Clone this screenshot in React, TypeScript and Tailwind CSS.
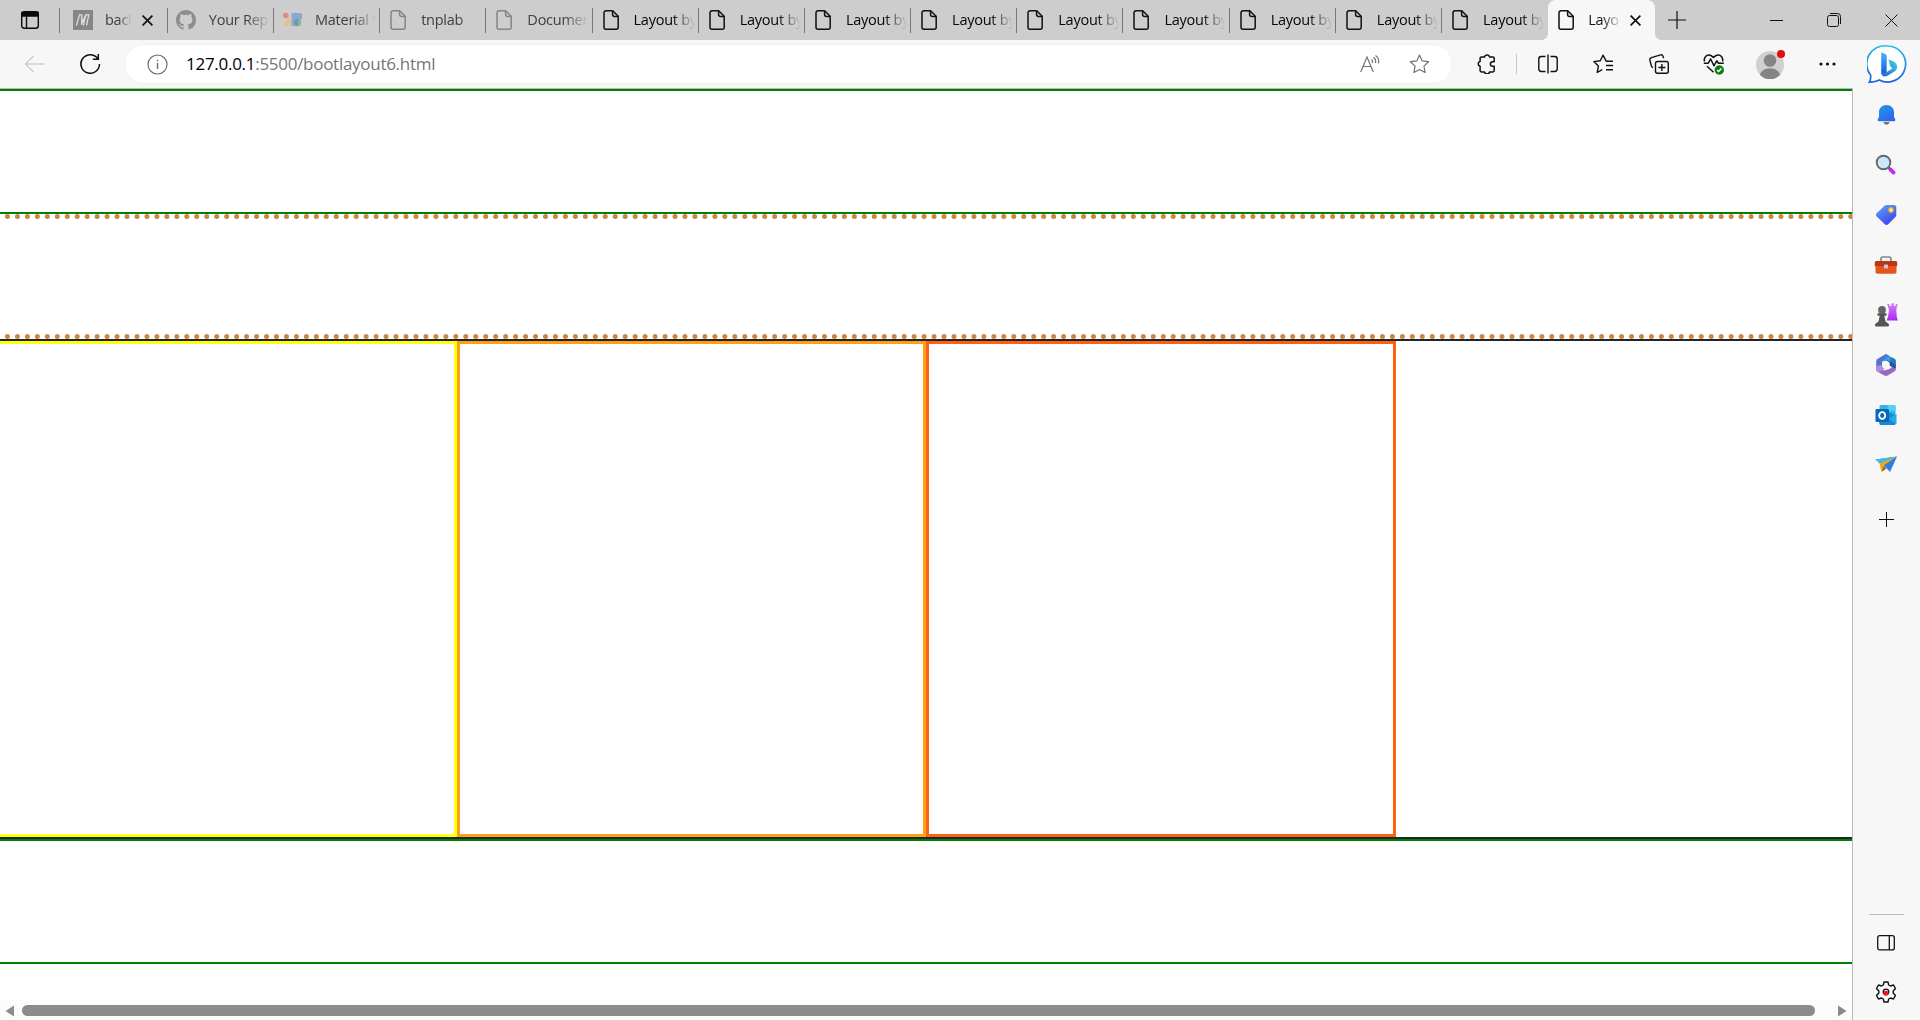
import React from 'react';

const FileIcon = ({ dim = false }: { dim?: boolean }) => (
  <svg width="16" height="20" viewBox="0 0 16 20" fill="none" stroke={dim ? '#858585' : '#111'} strokeWidth="1.5" strokeLinejoin="round" className="ml-[2px] shrink-0">
    <path d="M3 .8h6.700l5.500 5.500v10.900a2 2 0 0 1-2 2H3a2 2 0 0 1-2-2V2.800a2 2 0 0 1 2-2Z" />
    <path d="M9.600 1v3.600a2 2 0 0 0 2 2h3.500" />
  </svg>
);

const MIcon = () => (
  <svg width="20" height="20" viewBox="0 0 20 20" className="shrink-0">
    <path fill="#868686" d="M0 0h20v20H0z" />
    <path d="M3.300 15.500 6.500 4.800h2.200l.3 8.200 3.700-8.200h3.100l-2.300 10.700M8.700 5v10M12.700 5l-2.400 10.500" fill="none" stroke="#dcdcdc" strokeWidth="1.300" />
  </svg>
);

const GithubIcon = () => (
  <svg width="20" height="20" viewBox="0 0 16 16" fill="#8b8d90" className="shrink-0">
    <path d="M8 0C3.58 0 0 3.58 0 8c0 3.54 2.29 6.53 5.47 7.59.4.07.55-.17.55-.38 0-.19-.01-.82-.01-1.49-2.01.37-2.53-.49-2.69-.94-.09-.23-.48-.94-.82-1.13-.28-.15-.68-.52-.01-.53.63-.01 1.08.58 1.23.82.72 1.21 1.87.87 2.33.66.07-.52.28-.87.51-1.07-1.78-.2-3.64-.89-3.64-3.95 0-.87.31-1.59.82-2.15-.08-.2-.36-1.02.08-2.12 0 0 .67-.21 2.2.82A7.6 7.6 0 0 1 8 3.86c.68 0 1.36.09 2 .27 1.53-1.04 2.2-.82 2.2-.82.44 1.1.16 1.92.08 2.12.51.56.82 1.27.82 2.15 0 3.07-1.87 3.75-3.65 3.95.29.25.54.73.54 1.48 0 1.07-.01 1.93-.01 2.2 0 .21.15.46.55.38A8.01 8.01 0 0 0 16 8c0-4.42-3.58-8-8-8Z" />
  </svg>
);

const MaterialIcon = () => (
  <svg width="20" height="20" viewBox="0 0 20 20" className="shrink-0">
    <path fill="#e6c384" d="M8 5v11H1z" />
    <circle cx="3.800" cy="5.500" r="2.800" fill="#dd8a84" />
    <path fill="#8aa6d6" d="M9.500 3H17a3.500 3.500 0 0 1 0 7 3.500 3.500 0 0 1-3 6H9.500z" />
    <circle cx="15.600" cy="12.600" r="3.700" fill="#86b591" />
    <path fill="#6b98a5" d="M12 12a4 4 0 0 1 4-3v7a4 4 0 0 1-4-3z" />
  </svg>
);

const TabClose = () => (
  <svg width="11" height="11" viewBox="0 0 11 11" stroke="#111" strokeWidth="1.700" className="shrink-0">
    <path d="m.6.6 9.800 9.800M10.400.6.6 10.400" />
  </svg>
);

type TabData = { title: string; icon: React.ReactNode; dim?: boolean };
const tabs: TabData[] = [
  { title: 'Your Rep', icon: <GithubIcon />, dim: true },
  { title: 'Material S', icon: <MaterialIcon />, dim: true },
  { title: 'tnplab', icon: <FileIcon dim />, dim: true },
  { title: 'Documen', icon: <FileIcon dim />, dim: true },
  ...Array.from({ length: 9 }, () => ({ title: 'Layout by', icon: <FileIcon /> })),
];

function Tab({ title, icon, dim, last }: TabData & { last: boolean }) {
  return (
    <div className="relative flex h-10 w-[106.2px] shrink-0 items-center pl-2">
      <div className="flex w-5 shrink-0">{icon}</div>
      <span className={(dim ? 'text-[#404040]' : 'text-[#050505]') + ' ml-[13px] w-[61px] overflow-hidden whitespace-nowrap [mask-image:linear-gradient(to_right,#000_38px,transparent_61px)]'}>
        {title}
      </span>
      {!last && <i className="absolute top-2 right-0 h-[25px] w-px bg-[#777]" />}
    </div>
  );
}

const TabBar = () => (
  <div className="flex h-10 items-center bg-[#cdcdcd] text-[14.5px] tracking-[-0.25px]">
    <div className="flex w-[59px] shrink-0 justify-center pl-px">
      <svg width="18" height="18" viewBox="0 0 18 18" fill="none" stroke="#0a0a0a" strokeWidth="1.400">
        <rect x=".7" y=".7" width="16.600" height="16.600" rx="2.500" />
        <path d="M1 1.500h16V5H1z" fill="#0a0a0a" />
        <path d="M5.500 5v12" />
      </svg>
    </div>
    <i className="h-[25px] w-px shrink-0 bg-[#777]" />
    <div className="flex h-[25px] w-[107.800px] shrink-0 items-center border-r border-[#777] pl-[13px]">
      <MIcon />
      <span className="mr-[10px] ml-[12px] w-[27px] overflow-hidden text-[#404040] [mask-image:linear-gradient(to_right,#000_14px,transparent_27px)]">back</span>
      <TabClose />
    </div>
    {tabs.map((t, i) => (
      <Tab key={i} {...t} last={i === tabs.length - 1} />
    ))}
    <div className="relative flex h-10 w-[107px] shrink-0 items-center rounded-t-lg bg-[#f7f7f7] pl-2">
      <i className="absolute bottom-0 -left-[6px] size-[6px] bg-[radial-gradient(circle_at_0_0,transparent_5.5px,#f7f7f7_6px)]" />
      <i className="absolute -right-[6px] bottom-0 size-[6px] bg-[radial-gradient(circle_at_100%_0,transparent_5.5px,#f7f7f7_6px)]" />
      <FileIcon />
      <span className="mr-3 ml-[14px] w-[30px] overflow-hidden text-[#111] [mask-image:linear-gradient(to_right,#000_14px,transparent_34px)]">Layo</span>
      <TabClose />
    </div>
    <svg width="18" height="18" viewBox="0 0 18 18" stroke="#111" strokeWidth="1.200" className="ml-[13px] shrink-0">
      <path d="M0 9h18M9 0v18" />
    </svg>
    <div className="ml-auto flex items-center pr-[22px]">
      <svg width="13" height="13" viewBox="0 0 13 13" className="mr-11"><path d="M0 6.500h13" stroke="#111" /></svg>
      <svg width="14" height="14" viewBox="0 0 14 14" fill="none" stroke="#111" className="mr-11">
        <rect x=".5" y="2.500" width="11" height="11" rx="2" />
        <path d="M3 .5h7.500a3 3 0 0 1 3 3V11" />
      </svg>
      <svg width="13" height="13" viewBox="0 0 13 13" stroke="#111"><path d="m.5.5 12 12M12.500.5l-12 12" /></svg>
    </div>
  </div>
);

const star = 'm10 1 2.700 5.900 6.400.8-4.700 4.400 1.200 6.400-5.600-3.100-5.600 3.100 1.200-6.400L.9 7.700l6.400-.8z';

const Toolbar = () => (
  <div className="flex h-12 items-center bg-[#f7f7f7]">
    <svg width="21" height="18" viewBox="0 0 21 18" fill="none" stroke="#cfcfcf" strokeWidth="1.300" className="ml-6"><path d="M20.500 9H1.500M9.500 1l-8 8 8 8" /></svg>
    <svg width="22" height="22" viewBox="0 0 22 22" fill="none" stroke="#111" strokeWidth="1.500" className="ml-[34px]">
      <path d="M20.500 11a9.300 9.300 0 1 1-3.500-7.300l2 2M19.300 1v5.200h-5.400" />
    </svg>
    <div className="ml-6 flex h-[38px] w-[1327px] items-center rounded-full bg-white pr-[22px] pl-[22px] shadow-[0_0_2px_#e2e2e2]">
      <svg width="21" height="21" viewBox="0 0 21 21" fill="none" stroke="#707070" strokeWidth="1.200">
        <circle cx="10.500" cy="10.500" r="9.500" /><path d="M10.500 9v6M10.500 5.800v1.500" strokeWidth="1.400" />
      </svg>
      <span className="ml-[18px] text-[17px] tracking-[-0.28px] text-[#767676]"><span className="text-black">127.0.0.1</span>:5500/bootlayout6.html</span>
      <svg width="20" height="18" viewBox="0 0 20 18" fill="none" stroke="#737373" strokeWidth="1.200" className="ml-auto">
        <path d="M.7 17 7 2l6.300 15M3 11.500h8M11.500 4.500c1 .8 1.300 2 1 3.500M13.500 2.200c1.800 1.300 2.500 3.300 2 5.800M15.500.6c2.500 1.600 3.600 4.200 3 7.800" />
      </svg>
      <svg width="21" height="20" viewBox="0 0 20 20" fill="none" stroke="#737373" strokeWidth="1.200" strokeLinejoin="round" className="ml-[29px]"><path d={star} /></svg>
    </div>
    <svg width="19" height="20" viewBox="0 0 19 20" fill="none" stroke="#111" strokeWidth="1.500" strokeLinejoin="round" className="ml-[25px]">
      <path d="M4.500 3h3a2.600 2.600 0 0 1 5.100 0h3.300c.7 0 1.300.6 1.300 1.300v3.400h-1.500a2.300 2.300 0 0 0 0 4.600h1.500v4.200c0 .8-.6 1.400-1.400 1.400h-3.200a2.600 2.600 0 0 1-5.100 0h-3c-.8 0-1.400-.6-1.400-1.400v-4.300a2.400 2.400 0 0 1 0-4.700V4.300C3.100 3.600 3.700 3 4.500 3Z" />
    </svg>
    <i className="ml-[20px] h-5 w-px bg-[#c8c8c8]" />
    <svg width="20" height="20" viewBox="0 0 20 20" fill="none" stroke="#111" strokeWidth="1.400" className="ml-[21px]">
      <path d="M7.500 2.500H3.200A2.400 2.400 0 0 0 .8 4.900v10.200a2.400 2.400 0 0 0 2.400 2.400h4.300M12.500 2.500h4.300a2.400 2.400 0 0 1 2.400 2.400v10.200a2.400 2.400 0 0 1-2.400 2.400h-4.300M10 .5v19" />
    </svg>
    <svg width="21" height="20" viewBox="0 0 21 20" fill="none" stroke="#111" strokeWidth="1.400" strokeLinejoin="round" className="ml-[35px]">
      <path d="M20 7.200h-6.800L10 1.200 7.300 6.800.8 7.600l4.600 4.500-1.200 6.400 5-2.800M13 11.500h7M13 15.700h7" />
    </svg>
    <svg width="20" height="20" viewBox="0 0 20 20" fill="none" stroke="#111" strokeWidth="1.400" className="ml-[35px]">
      <rect x="6.500" y="7.500" width="12.800" height="11.800" rx="2" /><path d="M12.900 10v7M9.400 13.500h7M4 13.500c-1-.3-1.400-1-1.700-1.800L.9 6.200c-.3-1.200.3-2.200 1.500-2.500L11.500.9c1.200-.3 2.100.3 2.500 1.400l.6 2" />
    </svg>
    <svg width="22" height="22" viewBox="0 0 22 22" fill="none" stroke="#111" strokeWidth="1.500" strokeLinejoin="round" className="ml-[34px]">
      <path d="M1.400 8.500C.6 4.500 3.300 1.800 6.200 2c2 .2 3.200 1.300 4.300 2.500 1.100-1.200 2.300-2.300 4.300-2.500 3-.2 5.600 2.500 4.800 6.500M.8 10.200h4.400l2.500-4.200 3.200 6.800 2.800-5 1.800 2.400h5.300M4 13.200l6.500 6" />
      <circle cx="16.300" cy="17" r="4.700" fill="#107c10" stroke="none" /><path d="m14 17 1.600 1.500 2.800-3" stroke="#fff" />
    </svg>
    <svg width="31" height="32" viewBox="0 0 31 32" className="ml-[31px]">
      <circle cx="14" cy="17" r="14" fill="#d2d0ce" /><circle cx="14" cy="12.500" r="6.300" fill="#878583" />
      <path d="M4 26.900c.8-3.800 4.500-6.700 10-6.700s9.200 2.900 10 6.700a14 14 0 0 1-20 0Z" fill="#878583" /><circle cx="25" cy="6" r="4" fill="#e30b0b" />
    </svg>
    <svg width="17" height="4" viewBox="0 0 17 4" fill="#111" className="ml-[32px]"><circle cx="2" cy="2" r="1.600" /><circle cx="8.500" cy="2" r="1.600" /><circle cx="15" cy="2" r="1.600" /></svg>
    <svg width="40" height="41" viewBox="0 0 40 41" className="mr-[13px] ml-auto">
      <defs>
        <linearGradient id="ring" x2="0" y2="1"><stop stopColor="#28bdea" /><stop offset="1" stopColor="#2461db" /></linearGradient>
        <linearGradient id="stem" x2="0" y2="1"><stop stopColor="#48b7f7" /><stop offset="1" stopColor="#1854db" /></linearGradient>
        <linearGradient id="swoosh" x1="0" x2="1" y1="1" y2="0"><stop stopColor="#2161dc" /><stop offset="1" stopColor="#37d9dd" /></linearGradient>
      </defs>
      <path d="M20.500 2a18 18 0 1 1-8.200 34c-3 1.600-6.300 2-9.900 2.200 1.100-1.900 1.500-4.100 1.200-7.200A18 18 0 0 1 20.500 2Z" fill="#fff" stroke="url(#ring)" strokeWidth="1.700" />
      <path d="m14.200 8.300 4 1.600c1 .4 1.500 1.100 1.500 2.200v17.500c-1.500 3-5.500 2.500-5.500-1.200z" fill="url(#stem)" />
      <path d="m21.500 15.500 5 2c4.500 2 4.500 7 1.700 9.500l-8 5c-3.400 1.500-6.200-.5-6-4.500 1 2 3.500 1.800 5.200.8l6.300-4-2.200-1.500z" fill="url(#swoosh)" />
    </svg>
  </div>
);

const sideIcons = [
  <svg key="bell" width="19" height="22" viewBox="0 0 19 22"><defs><linearGradient id="bell" x2=".7" y2="1"><stop stopColor="#1ba0df" /><stop offset="1" stopColor="#3162f1" /></linearGradient></defs><path d="M6.500 18h6c-.5 3.500-5.500 3.500-6 0Z" fill="#777" /><path d="M9.500 1c4.600 0 7.500 3.300 7.500 7.500v4.300l1.200 2.500c.5 1-.1 1.900-1.100 1.900H1.900C.9 17.200.3 16.300.8 15.300L2 12.800V8.500C2 4.300 4.900 1 9.500 1Z" fill="url(#bell)" /></svg>,
  <svg key="search" width="22" height="22" viewBox="0 0 22 22"><path d="m13 13 3 3" stroke="#555" strokeWidth="2" /><path d="m15.300 15.300 3.300 3.300" stroke="#c02af0" strokeWidth="3.800" strokeLinecap="round" /><circle cx="8.500" cy="8.500" r="6.800" fill="#c9e8fb" stroke="#666" strokeWidth="1.900" /></svg>,
  <svg key="tag" width="22" height="22" viewBox="0 0 22 22"><defs><linearGradient id="tag" x2=".6" y2="1"><stop stopColor="#60aaf5" /><stop offset="1" stopColor="#3e45ea" /></linearGradient></defs><path d="M11.500 1h7.500c1.400 0 2.300 1 2.300 2.300v7.800c0 .8-.3 1.500-.9 2l-7.200 7.200c-1 1-2.400 1-3.400 0L1.700 12.600c-1-1-1-2.400 0-3.400l7.800-7.400c.6-.6 1.200-.8 2-.8Z" fill="url(#tag)" /><circle cx="16" cy="6" r="1.900" fill="#f3efcb" stroke="#ffc81e" strokeWidth="1.500" /></svg>,
  <svg key="tools" width="24" height="20" viewBox="0 0 24 20"><path d="M7 7V3.800C7 2.800 7.700 2 8.800 2h6.400c1.100 0 1.800.8 1.800 1.800V7" fill="none" stroke="#888" strokeWidth="1.700" /><path d="M2.500 6h19c1 0 1.700.7 1.700 1.700v3.500H.8V7.700C.8 6.700 1.500 6 2.500 6Z" fill="#b93813" /><path d="M1.500 11h21v6c0 1-.7 1.700-1.700 1.700H3.200c-1 0-1.700-.7-1.700-1.700z" fill="#e5561c" /><rect x="10" y="9.500" width="4" height="4" rx=".7" fill="#c9c9c9" /></svg>,
  <svg key="chess" width="24" height="24" viewBox="0 0 24 24"><defs><linearGradient id="rook" x2="0" y2="1"><stop stopColor="#d283f8" /><stop offset="1" stopColor="#a928ee" /></linearGradient></defs><path d="M13.200 1h2.200v2h2V.3h2.500V3h1.800V1h2l-1.500 6 .6 7 1 3.500H12.600l1.400-3.500L15 7z" fill="url(#rook)" /><circle cx="8" cy="7" r="3.900" fill="#666" /><path d="M3.500 10.300h9v2.400h-2.200l1.200 5.800 3 2.200c1 .9.600 2.800-.6 2.800H2.100c-1.200 0-1.600-1.900-.6-2.800l3-2.200 1.200-5.800H3.500z" fill="#555" /></svg>,
  <svg key="m365" width="22" height="24" viewBox="0 0 22 24"><path d="m11 1 8.300 4.800c1 .6 1.500 1.400 1.500 2.500v7L14.500 12 11 8 6 8.500 5 5z" fill="#3aa2df" /><path d="M11 1 2.700 5.800c-1 .6-1.500 1.400-1.500 2.500v8.100c0 1 .5 1.800 1.300 2.300L7 17V9.500c0-1 .5-1.800 1.300-2.300L14 3z" fill="#4f76d6" /><path d="m2.500 18.700 6.800 3.900c1.100.6 2.300.6 3.400 0l6.600-4c1-.6 1.500-1.400 1.500-2.500V11l-6.300 5L9 17.500 7 16z" fill="#9b69c2" /><path d="M1.200 13v3.400c0 1 .5 1.800 1.300 2.300s2 .4 2.800-.1L11 15 7 12z" fill="#b38bdb" /><path d="M15 5.500v6.800L20.800 15V8.300c0-1.100-.5-1.900-1.500-2.500L17 4.500z" fill="#3277ba" /><path d="m12 7 8.500 5v3.500L14 12.500z" fill="#264f9e" /><circle cx="11" cy="12" r="3.900" fill="#f7f7f7" /></svg>,
  <svg key="outlook" width="22" height="22" viewBox="0 0 22 22"><rect x="4.500" y="1" width="16" height="20" rx="1.500" fill="#34b3e8" /><path d="M12.500 1h6.500c.8 0 1.500.7 1.500 1.500V7h-8z" fill="#50d2f4" /><path d="m4.500 12 8-4 8 3v8.500c0 .8-.7 1.500-1.500 1.500H6c-.8 0-1.500-.7-1.500-1.500z" fill="#128bd3" /><path d="m21.500 10-8 5 8 5z" fill="#28a8e9" /><rect x=".5" y="5" width="13.500" height="13" rx="1.300" fill="#0867b9" /><ellipse cx="7.200" cy="11.500" rx="3" ry="3.400" fill="none" stroke="#fff" strokeWidth="1.900" /></svg>,
  <svg key="plane" width="23" height="18" viewBox="0 0 23 18"><path d="m.5 3.500 21.500-3-7 15.500-6-6.500z" fill="#2e7fdd" /><path d="m.5 3.500 21.500-3L5 8z" fill="#38bde9" /><path d="M4.500 7.500 22 .5 8.500 9.500 6.500 16z" fill="#f6a51b" /><path d="m6.500 16 2-6.500 3 3z" fill="#ae6414" /></svg>,
];

const Sidebar = () => (
  <aside className="flex w-[68px] flex-col items-center border-l border-[#b9b9b9] bg-[#f7f7f7] pt-[2px] pr-px">
    {sideIcons.map((icon, i) => <div key={i} className="flex h-[50px] items-center">{icon}</div>)}
    <svg width="15" height="15" viewBox="0 0 15 15" stroke="#111" className="mt-[22px]"><path d="M0 7.500h15M7.500 0v15" /></svg>
    <i className="mt-auto h-px w-[35px] bg-[#bcbcbc]" />
    <svg width="18" height="16" viewBox="0 0 18 16" fill="none" stroke="#111" strokeWidth="1.300" className="mt-5"><rect x=".7" y=".7" width="16.600" height="14.200" rx="2" /><path d="M12.300 1v14" /></svg>
    <svg width="22" height="22" viewBox="0 0 22 22" fill="none" stroke="#111" strokeWidth="1.400" strokeLinejoin="round" className="mt-[30px] mb-[17px]">
      <path d="M9 1h4l.7 3 1.800 1 3-1 2 3.500L18.200 10v2l2.300 2.500-2 3.500-3-1-1.800 1-.7 3H9l-.7-3-1.800-1-3 1-2-3.500L3.800 12v-2L1.500 7.500l2-3.500 3 1 1.800-1z" /><circle cx="11" cy="10.800" r="2.700" /><circle cx="11" cy="12.200" r="2.500" fill="#f01420" stroke="none" />
    </svg>
  </aside>
);

export default function App() {
  return (
    <div className="flex h-[1020px] w-[1920px] flex-col overflow-hidden bg-white font-['Open_Sans','Noto_Sans',sans-serif]">
      <TabBar />
      <Toolbar />
      <div className="flex min-h-0 grow">
        <main className="flex w-[1852px] flex-col overflow-hidden border-t border-[#b9b9b9]">
          <div className="h-[125px] shrink-0 border-y-2 border-[#008000]" />
          <div className="-ml-[5px] h-[125px] w-[1890px] shrink-0 border-[5px] border-dotted border-[#cd853f]" />
          <div className="flex h-[500px] shrink-0 border-y-2 border-[#212529]">
            <div className="-ml-3 w-[469px] border-[3px] border-[#ffff14]" />
            <div className="w-[469px] border-[3px] border-[#ffa014]" />
            <div className="w-[470px] border-[3px] border-[#ff6014]" />
          </div>
          <div className="h-[125px] shrink-0 border-y-2 border-[#008000]" />
          <div className="mt-auto flex h-5 shrink-0 items-center bg-[#fcfcfc] pt-px pr-[5px] pl-[5px]">
            <svg width="9" height="12" viewBox="0 0 9 12" fill="#8b8b8b"><path d="M9 .5v11L.5 6z" /></svg>
            <div className="ml-2 h-[11px] w-[1793px] rounded-full bg-[#8b8b8b]" />
            <svg width="9" height="12" viewBox="0 0 9 12" fill="#8b8b8b" className="ml-auto"><path d="M0 .5v11L8.500 6z" /></svg>
          </div>
        </main>
        <Sidebar />
      </div>
    </div>
  );
}
